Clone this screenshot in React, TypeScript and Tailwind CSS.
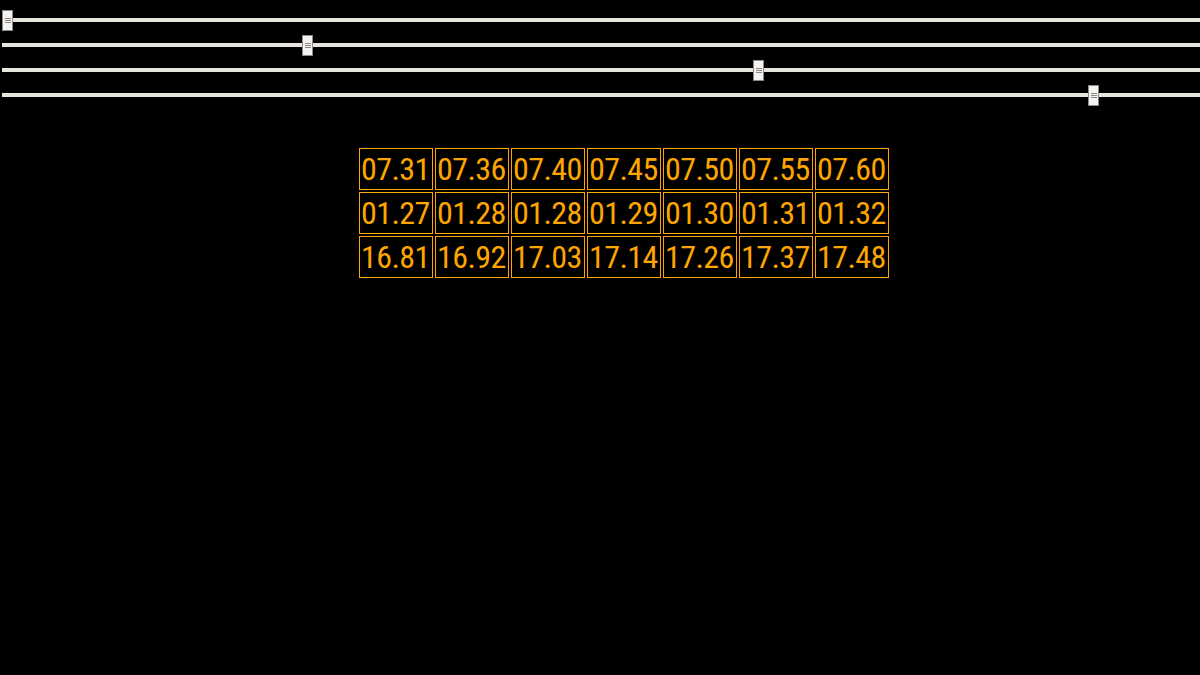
import React from "react";

const thumbs = [2, 302, 753, 1088];

const rows = [
  ["07.31", "07.36", "07.40", "07.45", "07.50", "07.55", "07.60"],
  ["01.27", "01.28", "01.28", "01.29", "01.30", "01.31", "01.32"],
  ["16.81", "16.92", "17.03", "17.14", "17.26", "17.37", "17.48"],
];

function Slider({ left }: { left: number }) {
  return (
    <div className="h-[25px] pt-[10px]">
      <div className="relative ml-[2px] w-[1198px] h-[4px] bg-[#e8e5df]">
        <div
          className="absolute top-[-8px] w-[11px] h-[21px] border border-[#8c8883] bg-[#f4f3f1] flex flex-col items-center justify-center gap-[1px]"
          style={{ left: left - 2 }}
        >
          <div className="w-[6px] h-[1px] bg-[#8a8886]" />
          <div className="w-[6px] h-[1px] bg-[#8a8886]" />
          <div className="w-[6px] h-[1px] bg-[#8a8886]" />
        </div>
      </div>
    </div>
  );
}

export default function App() {
  return (
    <div className="w-[1200px] h-[675px] bg-black overflow-hidden">
      <div className="pt-[8px] flex flex-col">
        {thumbs.map((t, i) => (
          <Slider key={i} left={t} />
        ))}
      </div>
      <div className="ml-[357px] mt-[38px]">
        <table className="border-separate border-spacing-[2px] table-fixed w-[534px]">
          <tbody>
            {rows.map((r, i) => (
              <tr key={i}>
                {r.map((c, j) => (
                  <td
                    key={j}
                    className="border border-[#ffa500] p-[1px] text-[#ffa500] text-[32px] leading-[38px] h-[42px] w-[74px] whitespace-nowrap overflow-hidden tracking-[-0.6px]"
                    style={{ fontFamily: '"Roboto Condensed", Roboto, sans-serif' }}
                  >
                    {c}
                  </td>
                ))}
              </tr>
            ))}
          </tbody>
        </table>
      </div>
    </div>
  );
}
